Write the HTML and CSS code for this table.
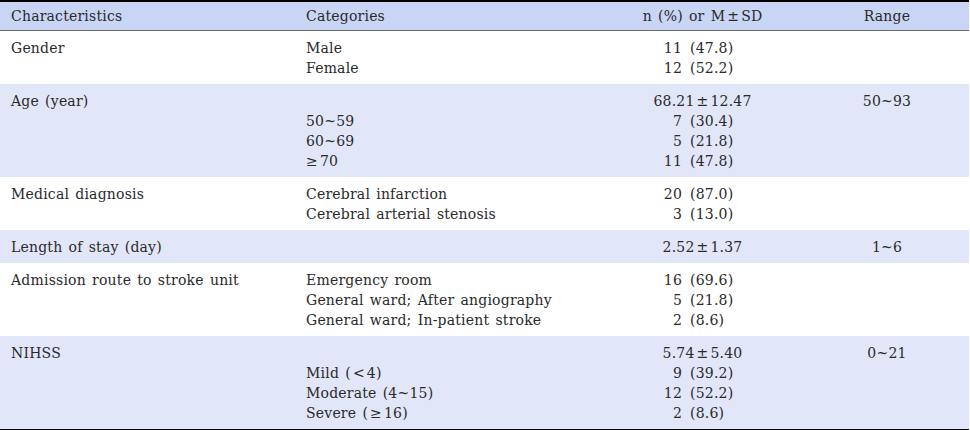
FILE: index.html
```html
<!DOCTYPE html>
<html lang="en">
<head>
<meta charset="utf-8">
<title>Characteristics</title>
<link rel="stylesheet" href="styles.css">
</head>
<body>
<table class="tbl">
  <colgroup>
    <col class="w1"><col class="w2"><col class="w3"><col class="w4">
  </colgroup>
  <thead>
    <tr>
      <th class="c1">Characteristics</th>
      <th class="c2">Categories</th>
      <th class="c3">n (%) or M<span class="sym">±</span>SD</th>
      <th class="c4">Range</th>
    </tr>
  </thead>
  <tbody>
    <tr>
      <td class="c1">Gender</td>
      <td class="c2"><div>Male</div><div>Female</div></td>
      <td class="c3">
        <div class="np"><span class="n">11</span><span class="p">(47.8)</span></div>
        <div class="np"><span class="n">12</span><span class="p">(52.2)</span></div>
      </td>
      <td class="c4"></td>
    </tr>
    <tr class="alt">
      <td class="c1">Age (year)</td>
      <td class="c2"><div>&nbsp;</div><div>50~59</div><div>60~69</div><div><span class="sym sl">≥</span>70</div></td>
      <td class="c3">
        <div class="pm">68.21<span class="sym">±</span>12.47</div>
        <div class="np"><span class="n">7</span><span class="p">(30.4)</span></div>
        <div class="np"><span class="n">5</span><span class="p">(21.8)</span></div>
        <div class="np"><span class="n">11</span><span class="p">(47.8)</span></div>
      </td>
      <td class="c4">50~93</td>
    </tr>
    <tr>
      <td class="c1">Medical diagnosis</td>
      <td class="c2"><div>Cerebral infarction</div><div>Cerebral arterial stenosis</div></td>
      <td class="c3">
        <div class="np"><span class="n">20</span><span class="p">(87.0)</span></div>
        <div class="np"><span class="n">3</span><span class="p">(13.0)</span></div>
      </td>
      <td class="c4"></td>
    </tr>
    <tr class="alt">
      <td class="c1">Length of stay (day)</td>
      <td class="c2"></td>
      <td class="c3"><div class="pm">2.52<span class="sym">±</span>1.37</div></td>
      <td class="c4">1~6</td>
    </tr>
    <tr>
      <td class="c1">Admission route to stroke unit</td>
      <td class="c2"><div>Emergency room</div><div>General ward; After angiography</div><div>General ward; In-patient stroke</div></td>
      <td class="c3">
        <div class="np"><span class="n">16</span><span class="p">(69.6)</span></div>
        <div class="np"><span class="n">5</span><span class="p">(21.8)</span></div>
        <div class="np"><span class="n">2</span><span class="p">(8.6)</span></div>
      </td>
      <td class="c4"></td>
    </tr>
    <tr class="alt last">
      <td class="c1">NIHSS</td>
      <td class="c2"><div>&nbsp;</div><div>Mild (<span class="sym">&lt;</span>4)</div><div>Moderate (4~15)</div><div>Severe (<span class="sym">≥</span>16)</div></td>
      <td class="c3">
        <div class="pm">5.74<span class="sym">±</span>5.40</div>
        <div class="np"><span class="n">9</span><span class="p">(39.2)</span></div>
        <div class="np"><span class="n">12</span><span class="p">(52.2)</span></div>
        <div class="np"><span class="n">2</span><span class="p">(8.6)</span></div>
      </td>
      <td class="c4">0~21</td>
    </tr>
  </tbody>
</table>
</body>
</html>
```

FILE: styles.css
```css
html, body {
  margin: 0;
  padding: 0;
  background: #ffffff;
}

.tbl {
  border-collapse: collapse;
  table-layout: fixed;
  width: 969px;
  font-family: "DejaVu Serif", serif;
  font-size: 14px;
  line-height: 20px;
  letter-spacing: 0.2px;
  word-spacing: 1.5px;
  color: #2a2a2a;
}

.w1 { width: 295px; }
.w2 { width: 305px; }
.w3 { width: 205px; }
.w4 { width: 164px; }

.tbl thead tr {
  background: #c9d5f5;
}

.tbl th {
  font-weight: normal;
  padding: 4px 0 4px;
  border-top: 2px solid #000000;
  border-bottom: 1px solid #6a6a6a;
  text-align: left;
}

.tbl td {
  padding: 7px 0 6px;
  vertical-align: top;
}

.tbl tbody tr.alt {
  background: #e1e7f9;
}

.tbl tbody tr.last td {
  border-bottom: 2px solid #000000;
}

.tbl .c1 { padding-left: 11px; }
.tbl .c2 { padding-left: 11px; }
.tbl .c3 { text-align: center; }
.tbl .c4 { text-align: center; }

.np {
  display: grid;
  grid-template-columns: 82px auto;
  column-gap: 8px;
  text-align: left;
}

.np .n {
  text-align: right;
}

.pm {
  text-align: center;
}

.sym {
  margin: 0 2px;
}

.sym.sl {
  margin-left: 0;
}
```
